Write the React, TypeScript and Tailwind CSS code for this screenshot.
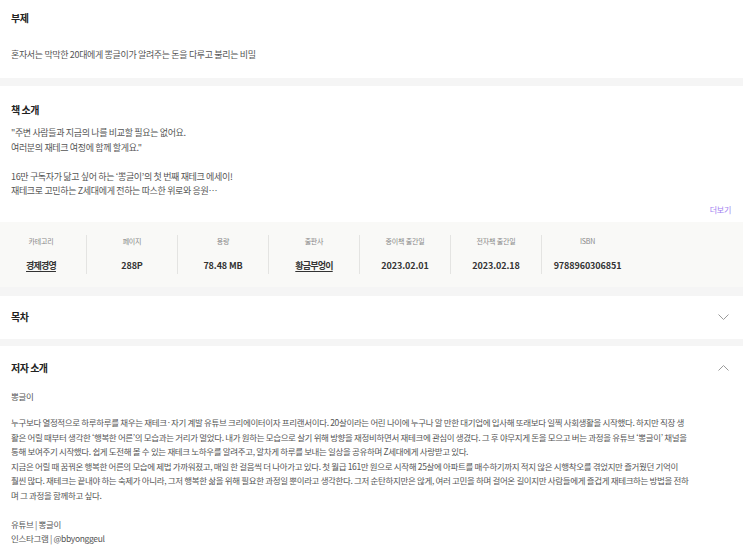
import React from 'react';

const FONT = { fontFamily: '"Noto Sans CJK KR", "Noto Sans", sans-serif' };

const infoItems = [
  { label: '카테고리', value: '경제경영', link: true },
  { label: '페이지', value: '288P' },
  { label: '용량', value: '78.48 MB' },
  { label: '출판사', value: '황금부엉이', link: true },
  { label: '종이책 출간일', value: '2023.02.01' },
  { label: '전자책 출간일', value: '2023.02.18' },
  { label: 'ISBN', value: '9788960306851' },
];

const introLines = [
  '"주변 사람들과 지금의 나를 비교할 필요는 없어요.',
  '여러분의 재테크 여정에 함께 할게요."',
  '',
  '16만 구독자가 닮고 싶어 하는 ‘뽕글이’의 첫 번째 재테크 에세이!',
  '재테크로 고민하는 Z세대에게 전하는 따스한 위로와 응원…',
];

const authorLines = [
  '누구보다 열정적으로 하루하루를 채우는 재테크·자기 계발 유튜브 크리에이터이자 프리랜서이다. 20살이라는 어린 나이에 누구나 알 만한 대기업에 입사해 또래보다 일찍 사회생활을 시작했다. 하지만 직장 생',
  '활은 어릴 때부터 생각한 ‘행복한 어른’의 모습과는 거리가 멀었다. 내가 원하는 모습으로 살기 위해 방향을 재정비하면서 재테크에 관심이 생겼다. 그 후 야무지게 돈을 모으고 버는 과정을 유튜브 ‘뽕글이’ 채널을',
  '통해 보여주기 시작했다. 쉽게 도전해 볼 수 있는 재테크 노하우를 알려주고, 알차게 하루를 보내는 일상을 공유하며 Z세대에게 사랑받고 있다.',
  '지금은 어릴 때 꿈꿔온 행복한 어른의 모습에 제법 가까워졌고, 매일 한 걸음씩 더 나아가고 있다. 첫 월급 161만 원으로 시작해 25살에 아파트를 매수하기까지 적지 않은 시행착오를 겪었지만 즐거웠던 기억이',
  '훨씬 많다. 재테크는 끝내야 하는 숙제가 아니라, 그저 행복한 삶을 위해 필요한 과정일 뿐이라고 생각한다. 그저 순탄하지만은 않게, 여러 고민을 하며 걸어온 길이지만 사람들에게 즐겁게 재테크하는 방법을 전하',
  '며 그 과정을 함께하고 싶다.',
];

function Chevron({ up }: { up?: boolean }) {
  return (
    <svg width="11" height="6" viewBox="0 0 11 6" fill="none" className={up ? 'rotate-180' : ''}>
      <polyline points="0.5,0.5 5.5,5.5 10.5,0.5" stroke="#9a9a9a" strokeWidth="1" />
    </svg>
  );
}

function SectionTitle({ children }: { children: React.ReactNode }) {
  return <h3 className="text-[10px] font-bold leading-[14px] tracking-[-0.5px] text-[#222]">{children}</h3>;
}

// body copy; the short blurbs run a touch larger than the long author bio
function Lines({ lines, large }: { lines: string[]; large?: boolean }) {
  return (
    <div
      className={`${large ? 'text-[9px]' : 'text-[8.5px]'} leading-[14.5px] tracking-[-0.35px] text-[#555]`}
    >
      {lines.map((l, i) => (
        <div key={i} className="whitespace-nowrap h-[14.5px]">
          {l}
        </div>
      ))}
    </div>
  );
}

export default function App() {
  return (
    <div className="w-[743px] h-[552px] overflow-hidden bg-white" style={FONT}>
      {/* 부제 */}
      <section className="pl-[11px] pr-3 pt-[11px] h-[78px]">
        <SectionTitle>부제</SectionTitle>
        <p className="mt-[23px] text-[9px] leading-[14.5px] tracking-[-0.35px] text-[#555]">
          혼자서는 막막한 20대에게 뽕글이가 알려주는 돈을 다루고 불리는 비밀
        </p>
      </section>
      <div className="h-2 bg-[#f5f5f5]" />

      {/* 책 소개 */}
      <section>
        <div className="pl-[11px] pr-3 pt-[17px]">
          <SectionTitle>책 소개</SectionTitle>
          <div className="mt-[9px]">
            <Lines lines={introLines} large />
          </div>
          <div className="flex justify-end h-[23px]">
            <button className="text-[8px] leading-[14px] tracking-[-0.3px] text-[#a27ff0]">더보기</button>
          </div>
        </div>
        <div className="h-[65px] bg-[#f9f9f7] flex items-center">
          <div className="flex -ml-1">
            {infoItems.map((it, i) => (
              <div
                key={it.label}
                className={`w-[91px] h-[39px] flex flex-col items-center ${i < infoItems.length - 1 ? 'border-r border-[#e4e4e2]' : ''}`}
              >
                <div className="mt-[1px] text-[7px] leading-[10px] tracking-[-0.2px] text-[#888]">{it.label}</div>
                <div
                  className={`mt-[14px] text-[9px] font-bold leading-[12px] text-[#333] ${it.link ? 'underline underline-offset-2 tracking-[-0.8px]' : 'tracking-[-0.1px]'}`}
                >
                  {it.value}
                </div>
              </div>
            ))}
          </div>
        </div>
      </section>
      <div className="h-[9px] bg-[#f5f5f5]" />

      {/* 목차 */}
      <section className="pl-[11px] pr-[14px] h-[43px] flex items-center justify-between">
        <SectionTitle>목차</SectionTitle>
        <Chevron />
      </section>
      <div className="h-[7px] bg-[#f5f5f5]" />

      {/* 저자 소개 */}
      <section className="pl-[11px] pr-3">
        <div className="pt-[15px] flex items-center justify-between pr-[2px]">
          <SectionTitle>저자 소개</SectionTitle>
          <Chevron up />
        </div>
        <div className="mt-[14px]">
          <Lines lines={['뽕글이']} />
        </div>
        <div className="mt-[12px]">
          <Lines lines={[...authorLines, '', '유튜브 | 뽕글이', '인스타그램 | @bbyonggeul']} />
        </div>
      </section>
    </div>
  );
}
